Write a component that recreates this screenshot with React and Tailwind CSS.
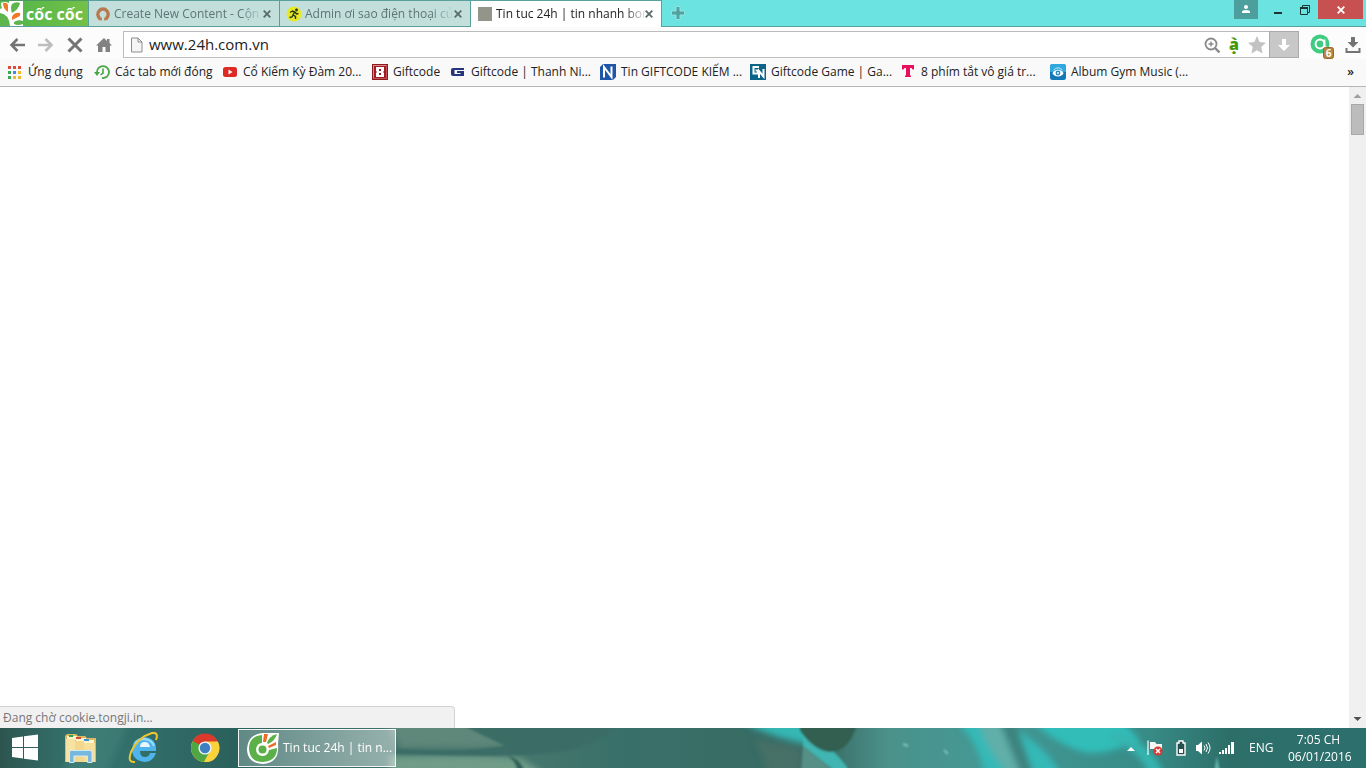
import React, { useState } from 'react';

const CocCocMark = () => (
  <svg className="w-6 h-[25px] shrink-0" viewBox="0 0 24 25">
    <rect width="23" height="25" fill="#fff" />
    <path d="M0 0 H9 L9 2 Q4 0 1 2 Q1 5 2 7 L0 8 Z" fill="#5aba4a" />
    <path d="M3 2 Q7 1 8 4 L8 11 Q3 8 3 2 Z" fill="#f07a2b" />
    <path d="M12 3 Q16 0 20 2 Q19 8 12 12 Q10 7 12 3 Z" fill="#5fb54d" />
    <path d="M12 16 Q14 11 20 12 Q21 15 18 16 L12 19 Z" fill="#f07a2b" />
    <path d="M14 21 Q18 18 23 20 V23 Q18 25 14 23 Z" fill="#5fb54d" />
    <path d="M0 12 Q9 13 10 25 H0 Z" fill="#5fb54d" />
  </svg>
);

const RingIcon = () => (
  <svg className="w-4 h-4" viewBox="0 0 16 16">
    <path d="M5 12.5 A5.2 5.2 0 1 1 11 12.5" fill="none" stroke="#b8794f" strokeWidth="3.4" />
    <path d="M3 14 L7 14.5 L6.5 11 Z M13 14 L9 14.5 L9.5 11 Z" fill="#b8794f" />
  </svg>
);

const RunnerIcon = () => (
  <svg className="w-4 h-4" viewBox="0 0 16 16">
    <circle cx="8" cy="8" r="7.5" fill="#e6ea26" />
    <circle cx="10.5" cy="4" r="1.4" fill="#26331c" />
    <path d="M4 6.5 L6.5 5 L9 6 L10.5 8 L12.5 7.5 M8.5 6 L7 9 L9.5 10.5 L9.5 13 M7 9 L6 11 L3.5 11.5" fill="none" stroke="#26331c" strokeWidth="1.4" />
  </svg>
);

const SquareIcon = () => (
  <svg className="w-4 h-4" viewBox="0 0 16 16">
    <rect x="1" y="1" width="14" height="14" fill="#93948a" />
  </svg>
);

const CloseIcon = () => (
  <svg className="w-2 h-2" viewBox="0 0 8 8">
    <path d="M0.7 0.7 L7.3 7.3 M7.3 0.7 L0.7 7.3" stroke="currentColor" strokeWidth="1.8" />
  </svg>
);

const AppsIcon = () => (
  <svg className="w-4 h-4" viewBox="0 0 16 16">
    <path d="M1 2h3v3H1z M6 2h3v3H6z M11 2h3v3h-3z" fill="#dd4b3e" />
    <path d="M1 7h3v3H1z M1 12h3v3H1z" fill="#3aa757" />
    <path d="M6 7h3v3H6z" fill="#4688f1" />
    <path d="M11 7h3v3h-3z M6 12h3v3H6z M11 12h3v3h-3z" fill="#f0b92d" />
  </svg>
);

const HistoryIcon = () => (
  <svg className="w-4 h-4" viewBox="0 0 16 16">
    <path d="M3 8.5 A6 6 0 1 1 8 14" fill="none" stroke="#4ba648" strokeWidth="1.8" />
    <path d="M0 8 L6 8 L3 12 Z" fill="#4ba648" />
    <path d="M9 4.5 V9 L6.5 11" fill="none" stroke="#4ba648" strokeWidth="1.6" />
  </svg>
);

const YoutubeIcon = () => (
  <svg className="w-4 h-4" viewBox="0 0 16 16">
    <rect x="1" y="3" width="14" height="10" rx="2.5" fill="#dd2a23" />
    <path d="M6.5 5.5 L10.5 8 L6.5 10.5 Z" fill="#fff" />
  </svg>
);

const EightIcon = () => (
  <svg className="w-4 h-4" viewBox="0 0 16 16">
    <rect width="16" height="16" fill="#8e1b20" />
    <path d="M1 15 V1 H15 Z" fill="#d98a8c" />
    <path d="M15 1 V15 H1 Z" fill="#c05558" />
    <rect x="2" y="2" width="12" height="12" fill="#a01d22" />
    <path d="M4 3 H12 V7 L11 8 L12 9 V13 H4 V9 L5 8 L4 7 Z" fill="#fff" />
    <path d="M7 5 H9 V7 H7 Z M7 9 H9 V11 H7 Z" fill="#a01d22" />
  </svg>
);

const GIcon = () => (
  <svg className="w-4 h-4" viewBox="0 0 16 16">
    <path d="M3 4 H14 V6 H4.5 V10 H10.5 V9 H7 V7 H14 V12 H3 Q1 12 1 10 V6 Q1 4 3 4 Z" fill="#27357f" />
  </svg>
);

const NIcon = () => (
  <svg className="w-4 h-4" viewBox="0 0 16 16">
    <path d="M3 0 H16 V13 L13 16 H0 V3 Z" fill="#1f56a8" />
    <path d="M4 13.5 V3 L11.5 13 V2.5" fill="none" stroke="#fff" strokeWidth="2" />
  </svg>
);

const GNIcon = () => (
  <svg className="w-4 h-4" viewBox="0 0 16 16">
    <rect width="16" height="16" fill="#0c6489" />
    <path d="M9 3 H3.5 V9.5 H8 V6.5 H5.5" fill="none" stroke="#fff" strokeWidth="2" />
    <path d="M9 14 V7 L13.5 12.5 V5" fill="none" stroke="#fff" strokeWidth="2" />
  </svg>
);

const TIcon = () => (
  <svg className="w-4 h-4" viewBox="0 0 16 16">
    <path d="M2 1 H14 V5.5 H12.5 L11.5 4 H10 V11.5 H11 V13 H5 V11.5 H6 V4 H4.5 L3.5 5.5 H2 Z" fill="#e8105c" />
  </svg>
);

const AlbumIcon = () => (
  <svg className="w-4 h-4" viewBox="0 0 16 16">
    <rect width="16" height="16" rx="2.5" fill="#1478b8" />
    <path d="M0 8 V2.5 Q0 0 2.500 0 H13.5 Q16 0 16 2.5 V8 Z" fill="#2fa8de" />
    <path d="M3.5 6 Q8 1.500 12.5 6" fill="none" stroke="#bfe6f7" />
    <path d="M2.5 9.5 Q3 6.500 8 5.500 Q13 6.500 13.5 9.5 Q11.5 12.500 8 12.500 Q4.500 12.500 2.500 9.500 Z" fill="#fff" />
    <circle cx="8" cy="9" r="2.4" fill="#1f8bc9" />
    <circle cx="8" cy="9" r="1" fill="#fff" />
  </svg>
);

const tabs = [
  { id: 1, title: 'Create New Content - Cộn', icon: RingIcon },
  { id: 2, title: 'Admin ơi sao điện thoại củ', icon: RunnerIcon },
  { id: 3, title: 'Tin tuc 24h | tin nhanh bor', icon: SquareIcon },
];

const bookmarks = [
  { label: 'Ứng dụng', icon: AppsIcon, width: 'w-[87px]' },
  { label: 'Các tab mới đóng', icon: HistoryIcon, width: 'w-[128px]' },
  { label: 'Cổ Kiếm Kỳ Đàm 20...', icon: YoutubeIcon, width: 'w-[150px]' },
  { label: 'Giftcode', icon: EightIcon, width: 'w-[78px]' },
  { label: 'Giftcode | Thanh Ni...', icon: GIcon, width: 'w-[150px]' },
  { label: 'Tin GIFTCODE KIẾM ...', icon: NIcon, width: 'w-[150px]' },
  { label: 'Giftcode Game | Ga...', icon: GNIcon, width: 'w-[150px]' },
  { label: '8 phím tắt vô giá tr...', icon: TIcon, width: 'w-[150px]' },
  { label: 'Album Gym Music (...', icon: AlbumIcon, width: 'w-[150px]' },
];

const TabStrip = () => {
  const [active, setActive] = useState(3);

  return (
    <header className="h-[27px] flex bg-[#6be3e0] border-b border-[#5aa19e]">
      <button aria-label="Cốc Cốc menu" className="w-[88px] flex items-center gap-[2px] bg-linear-to-r from-[#4db54a] to-[#74c048] border-t border-[#4d9a60]">
        <CocCocMark />
        <span className="text-white font-bold text-base leading-5 whitespace-nowrap">cốc cốc</span>
      </button>
      <div className="flex">
        {tabs.map(({ id, title, icon: Icon }) => (
          <div
            key={id}
            className={
              id === active
                ? 'w-[191px] h-[27px] flex items-center pl-[6px] pr-2 border-l border-t border-[#5aa19e] bg-white text-[#222]'
                : 'w-[191px] h-[26px] flex items-center pl-[6px] pr-2 border-l border-t border-[#5aa19e] bg-[#c2dfdc] text-[#5f7573]'
            }
          >
            <button onClick={() => setActive(id)} className="flex-1 min-w-0 flex items-center gap-[3px] text-left">
              <span className="shrink-0"><Icon /></span>
              <span className="flex-1 whitespace-nowrap text-xs [mask-image:linear-gradient(to_right,black_85%,transparent)]">
                {title}
              </span>
            </button>
            <button aria-label="Close tab" className="shrink-0 text-[#5a6b6a]"><CloseIcon /></button>
          </div>
        ))}
      </div>
      <button aria-label="New tab" className="w-8 flex items-center justify-center border-l border-[#5aa19e]">
        <svg className="w-[14px] h-[14px]" viewBox="0 0 14 14">
          <path d="M5 0.500 H9 V5 H13.500 V9 H9 V13.500 H5 V9 H0.500 V5 H5 Z" fill="#52a3a0" stroke="#90e5e2" strokeWidth="1" />
        </svg>
      </button>
      <div className="ml-auto flex items-start pr-[3px]">
        <button aria-label="Profile" className="w-6 h-[19px] flex justify-center items-center bg-[#4c9f9d]">
          <svg className="w-[10px] h-3" viewBox="0 0 10 12">
            <circle cx="5" cy="3" r="2" fill="#fff" />
            <path d="M1 9 V8 Q1 6 5 6 Q9 6 9 8 V9 Z" fill="#fff" />
          </svg>
        </button>
        <button aria-label="Minimize" className="ml-[7px] w-[26px] h-[19px] flex justify-center items-center">
          <svg className="w-2 h-3" viewBox="0 0 8 12"><path d="M0 8 H8 V10 H0 Z" fill="#1c3433" /></svg>
        </button>
        <button aria-label="Restore" className="w-[27px] h-[19px] flex justify-center items-center">
          <svg className="w-[10px] h-[10px]" viewBox="0 0 10 10">
            <path d="M0.5 2.5 H7.5 V9.5 H0.5 Z M2.5 2 V0.5 H9.5 V7.5 H8" fill="none" stroke="#1c3433" />
            <path d="M0 2 H8 V4 H0 Z" fill="#1c3433" />
          </svg>
        </button>
        <button aria-label="Close" className="w-[45px] h-[19px] flex justify-center items-center bg-[#c75050] text-white"><CloseIcon /></button>
      </div>
    </header>
  );
};

const Toolbar = () => {
  const [url, setUrl] = useState('www.24h.com.vn');

  return (
    <div className="h-8 pt-1 flex bg-[#fcfcfc] text-[#777]">
      <div className="w-[123px] flex items-center gap-[13px] pl-[9px] pb-px">
        <button aria-label="Back">
          <svg className="w-4 h-4" viewBox="0 0 16 16"><path d="M16 8 H2.5 M8.5 2 L2.5 8 L8.5 14" fill="none" stroke="#747474" strokeWidth="2.6" /></svg>
        </button>
        <button aria-label="Forward">
          <svg className="w-4 h-4" viewBox="0 0 16 16"><path d="M0 8 H13.5 M7.5 2 L13.5 8 L7.5 14" fill="none" stroke="#bdbdbd" strokeWidth="2.6" /></svg>
        </button>
        <button aria-label="Stop">
          <svg className="w-4 h-4" viewBox="0 0 16 16"><path d="M1.5 1.5 L14.5 14.5 M14.5 1.5 L1.5 14.5" stroke="#747474" strokeWidth="3" /></svg>
        </button>
        <button aria-label="Home">
          <svg className="w-4 h-4" viewBox="0 0 16 16"><path d="M8 1 L11 4 V2 H13.5 V6 L16 8.5 H14 V15 H9.5 V10 H6.5 V15 H2 V8.5 H0 Z" fill="#828282" /></svg>
        </button>
      </div>
      <div className="flex-1 h-[27px] flex items-center bg-white border border-[#bcbcbc] pl-[6px]">
        <svg className="w-[13px] h-4 shrink-0" viewBox="0 0 13 16">
          <path d="M1.5 1 H8 L12 5 V15 H1.5 Z" fill="#f5f5f5" stroke="#8c8c8c" />
          <path d="M8 1 V5 H12" fill="none" stroke="#8c8c8c" />
        </svg>
        <input
          aria-label="Address"
          value={url}
          onChange={(e) => setUrl(e.target.value)}
          className="flex-1 min-w-0 pl-[6px] pb-0.5 text-[15px] leading-5 text-[#222] outline-none bg-transparent"
        />
        <div className="flex items-center">
          <button aria-label="Zoom">
            <svg className="w-4 h-4" viewBox="0 0 16 16">
              <circle cx="7" cy="7" r="5.5" fill="none" stroke="#8a8a8a" strokeWidth="1.8" />
              <path d="M11 11 L15.5 15.5" stroke="#8a8a8a" strokeWidth="2.4" />
              <path d="M4.500 7 H9.500 M7 4.500 V9.500" stroke="#8a8a8a" strokeWidth="1.4" />
            </svg>
          </button>
          <button aria-label="Add accents" className="w-7 pb-0.5 text-[#42990a] text-base leading-6 font-extrabold">ạ̀</button>
          <button aria-label="Bookmark this page">
            <svg className="w-[18px] h-[18px]" viewBox="0 0 18 18"><path d="M9 0 L11.6 6 L18 6.7 L13.2 11 L14.6 17.5 L9 14.2 L3.4 17.5 L4.8 11 L0 6.7 L6.4 6 Z" fill="#c2c2c2" /></svg>
          </button>
          <button aria-label="Download media" className="ml-[3px] w-[30px] h-[27px] -mr-px flex items-center justify-center bg-[#c8c8c8] border border-[#aaa]">
            <svg className="w-3 h-3" viewBox="0 0 12 12"><path d="M4 0 H8 V6 H12 L6 12 L0 6 H4 Z" fill="#fff" /></svg>
          </button>
        </div>
      </div>
      <div className="w-[67px] flex items-center pl-[9px] pr-[5px] justify-between">
        <button aria-label="Extension">
          <svg className="w-7 h-7" viewBox="0 0 28 28">
            <circle cx="12" cy="13" r="9.5" fill="#3fcb82" />
            <circle cx="12" cy="13" r="4.4" fill="none" stroke="#fff" strokeWidth="2" />
            <circle cx="12" cy="13" r="2" fill="#3fcb82" />
            <path d="M16.4 8.5 V15 Q17 17.500 19 16" fill="none" stroke="#fff" strokeWidth="2" />
            <rect x="15.5" y="16.5" width="10" height="11" rx="2" fill="#b98440" stroke="#96662b" />
            <text x="20.500" y="26" textAnchor="middle" fontSize="10" fontWeight="700" fill="#fff">6</text>
          </svg>
        </button>
        <button aria-label="Downloads" className="pb-px">
          <svg className="w-4 h-4" viewBox="0 0 16 16"><path d="M6 0 H10 V5 H13.5 L8 10.5 L2.5 5 H6 Z M0.500 11 H2.500 V14 H13.500 V11 H15.500 V16 H0.500 Z" fill="#747474" /></svg>
        </button>
      </div>
    </div>
  );
};

const BookmarksBar = () => (
  <nav aria-label="Bookmarks" className="h-7 pl-[7px] pr-3 pb-px flex items-center bg-[#f9f9f9] border-b border-[#b6b6b6] text-xs text-[#222]">
    {bookmarks.map(({ label, icon: Icon, width }) => (
      <a key={label} href="#" className={`${width} shrink-0 flex items-center gap-[5px] whitespace-nowrap`}>
        <span className="shrink-0"><Icon /></span>
        {label}
      </a>
    ))}
    <button aria-label="More bookmarks" className="ml-auto leading-4 font-semibold">»</button>
  </nav>
);

const Page = () => (
  <main className="relative flex-1 min-h-0 flex bg-white">
    <div className="flex-1"></div>
    <div className="w-[17px] flex flex-col items-center justify-between bg-[#f0f0f0]">
      <div className="flex flex-col items-center">
        <svg className="w-[17px] h-[17px]" viewBox="0 0 17 17"><path d="M4.5 11 L8.5 7 L12.5 11 Z" fill="#a0a0a0" /></svg>
        <div className="w-[13px] h-[31px] bg-[#bcbcbc] border border-[#a8a8a8]"></div>
      </div>
      <svg className="w-[17px] h-[17px]" viewBox="0 0 17 17"><path d="M4.5 6 L12.5 6 L8.5 10 Z" fill="#505050" /></svg>
    </div>
    <div role="status" className="absolute left-0 bottom-0 w-1/3 h-[22px] pl-[3px] bg-[#f1f1f1] border-t border-r border-[#d2d2d2] rounded-tr text-xs leading-[22px] text-[#777]">
      Đang chờ cookie.tongji.in...
    </div>
  </main>
);

const Wallpaper = () => (
  <svg className="absolute inset-0 w-full h-full" viewBox="0 0 1366 40" preserveAspectRatio="none">
    <defs>
      <linearGradient id="base" x1="0" x2="1" y1="0" y2="0">
        <stop offset="0" stopColor="#2d5550" />
        <stop offset="0.06" stopColor="#367671" />
        <stop offset="0.17" stopColor="#2b615d" />
        <stop offset="0.35" stopColor="#4d7b70" />
        <stop offset="0.45" stopColor="#397069" />
        <stop offset="0.6" stopColor="#376a63" />
        <stop offset="0.65" stopColor="#4b918a" />
        <stop offset="0.72" stopColor="#449995" />
        <stop offset="0.84" stopColor="#388c88" />
        <stop offset="0.9" stopColor="#2d6e68" />
        <stop offset="1" stopColor="#2c706e" />
      </linearGradient>
      <filter id="soft"><feGaussianBlur stdDeviation="3" /></filter>
      <filter id="edge"><feGaussianBlur stdDeviation="1" /></filter>
    </defs>
    <rect width="1366" height="40" fill="url(#base)" />
    <g filter="url(#soft)">
      <path d="M90 -9 L130 -9 L105 49 L60 49 Z" fill="#42817a" opacity="0.6" />
      <path d="M385 -9 H495 L520 18 L400 20 Z" fill="#5f877a" />
      <path d="M390 28 Q460 25 520 30 L550 49 H390 Z" fill="#6f9c88" />
      <path d="M735 -9 H830 V20 Q780 14 735 -9 Z" fill="#35b7b4" />
      <path d="M755 12 L800 20 L800 49 H770 Z" fill="#466f66" />
      <path d="M955 -9 H1000 Q1050 20 1062 49 H985 Q980 16 955 -9 Z" fill="#35b9b7" />
      <path d="M978 -9 H996 L1030 49 H1010 Q985 20 978 -9 Z" fill="#60afa8" />
      <path d="M998 -9 H1014 L1035 49 H1022 Z" fill="#3e837f" />
      <path d="M1030 -9 H1120 L1140 12 Q1100 30 1080 23 Q1055 15 1030 -9 Z" fill="#31bdb9" />
      <path d="M1110 3 Q1150 10 1165 49 H1150 Q1140 20 1110 12 Z" fill="#35b5b0" />
    </g>
    <g filter="url(#edge)">
      <path d="M460 -4 H620 Q600 16 560 24 Q500 31 380 25 V20 Q460 25 505 18 Z" fill="#3a6d66" />
      <path d="M508 28 Q520 30 525 44 H518 Q516 33 508 28 Z" fill="#315f57" />
      <path d="M803 5 Q835 18 850 44 H836 L803 18 Z" fill="#3fb5b1" />
      <path d="M803 18 L835 44 H801 Z" fill="#558f86" />
      <path d="M800 -4 H857 Q849 24 829 24 Q812 21 800 2 Z" fill="#315e50" />
      <path d="M903 16 L908 18 M944 22 L948 26" stroke="#84c4bf" strokeWidth="2" />
      <path d="M1214 44 L1217 28 L1220 44 Z" fill="#62b2aa" />
    </g>
  </svg>
);

const Taskbar = () => (
  <footer className="relative h-10 bg-[#2f6964]">
    <Wallpaper />
    <div className="relative h-10 flex items-center text-white text-xs">
      <div className="flex items-center pl-[11px]">
        <button aria-label="Start" className="w-[53px]">
          <svg className="w-7 h-7" viewBox="0 0 28 28"><path d="M1 4 L12 2.5 V13 H1 Z M13 2.3 L27 0.5 V13 H13 Z M1 14 H12 V24.5 L1 23 Z M13 14 H27 V26.5 L13 24.7 Z" fill="#fff" /></svg>
        </button>
        <button aria-label="File Explorer" className="w-16">
          <svg className="w-8 h-8" viewBox="0 0 32 32">
            <path d="M1 4 L3 2 H12 L14 4 H21 L23 6 H32 V30 H1 Z" fill="#dcb962" />
            <path d="M3 4 H13 V8 H3 Z M12 6 H22 V10 H12 Z M20 8 H30 V12 H20 Z" fill="#fff3c9" />
            <path d="M5 3 H9 V5 H5 Z" fill="#29a64a" />
            <path d="M12 5 H17 V7 H12 Z" fill="#d04a31" />
            <path d="M20 7 H25 V9 H20 Z" fill="#3b8ed0" />
            <path d="M2 7 H11 V30 H2 Z" fill="#f6e3a3" />
            <path d="M11 9 H20 V30 H11 Z" fill="#f1d88c" />
            <path d="M20 11 H31 V30 H20 Z" fill="#f5df9a" />
            <path d="M5.500 30.500 V20 Q5.500 18.500 7 18.500 H26 Q28 18.500 28 20 V30.500 H23.500 V24 H10 V30.500 Z" fill="#77b8df" stroke="#d0ebf8" />
          </svg>
        </button>
        <button aria-label="Internet Explorer" className="w-[62px]">
          <svg className="w-8 h-8" viewBox="0 0 32 32">
            <path d="M28 21 Q25 30 16 30 Q4 28 4 17 Q5 6 16 5 Q29 6 28 19 H12 Q12 25 17 25 Q21 25 22 21 Z" fill="#4fb4ec" />
            <path d="M12 15 Q12 10 17 10 Q21 10 22 15 Z" fill="#e7f7fd" />
            <path d="M7 12 Q10 7 17 7 Q24 8 26 14" fill="none" stroke="#9bdcf9" strokeWidth="2" />
            <path d="M7 30 Q-1 31 3 20 Q10 5 24 1 Q31 0 28 8" fill="none" stroke="#edc52e" strokeWidth="2" />
          </svg>
        </button>
        <button aria-label="Chrome" className="w-12">
          <svg className="w-[30px] h-[30px]" viewBox="0 0 30 30">
            <circle cx="15" cy="15" r="14" fill="#f9d23c" />
            <path d="M15 15 L2.5 8.5 A14 14 0 0 1 28 9 H15 Z" fill="#da3a2c" />
            <path d="M15 15 L2.9 8 A14 14 0 0 0 14 29 L20 18 Z" fill="#4fa744" />
            <path d="M15 8.5 H27.8 A14 14 0 0 1 14 29 L20.5 18 Z" fill="#f9d23c" />
            <circle cx="15" cy="15" r="6.6" fill="#f3f3f3" />
            <circle cx="15" cy="15" r="5.2" fill="#3f7fc4" />
          </svg>
        </button>
        <button className="w-[158px] h-[38px] flex items-center gap-1 pl-2 border border-white/90 bg-linear-to-r from-white/25 to-white/45 whitespace-nowrap">
          <svg className="w-8 h-8 shrink-0" viewBox="0 0 32 32">
            <path d="M16 1 H32 L31 12 Q33 31 16 32 Q0 31 0 17 Q1 2 16 1 Z" fill="#fff" />
            <path d="M15 3 Q2 4 2 17 Q3 30 16 30 Q30 29 30 16 L22 18 Q21 24 15 24 Q9 23 9 17 Q10 11 15 11 Z" fill="#5cb04a" />
            <circle cx="15.5" cy="17.5" r="4" fill="#5cb04a" />
            <path d="M17 2 L21 2 L19 10 H16 Z M21 14 L29 10 V13 L22 16 Z" fill="#ed6d27" />
            <path d="M20 11 Q22 4 30 2 Q28 9 21 12 Z" fill="#5cb04a" />
          </svg>
          Tin tuc 24h | tin n...
        </button>
      </div>
      <div className="ml-auto flex items-center pr-[17px]">
        <button aria-label="Show hidden icons" className="w-5">
          <svg className="w-2 h-2" viewBox="0 0 8 8"><path d="M0 7 L4 3 L8 7 Z" fill="#fff" /></svg>
        </button>
        <button aria-label="Action Center" className="w-[29px]">
          <svg className="w-4 h-4" viewBox="0 0 16 16">
            <path d="M1 0.500 V15" stroke="#fff" strokeWidth="1.2" />
            <path d="M3 2 H8 L9.500 4 H15 V10 H8 L7 9 H3 Z" fill="#f3f7f6" />
            <circle cx="11" cy="11" r="4.5" fill="#da3730" />
            <path d="M9 9 L13 13 M13 9 L9 13" stroke="#fff" strokeWidth="1.5" />
          </svg>
        </button>
        <button aria-label="Battery" className="w-[19px]">
          <svg className="w-[10px] h-4" viewBox="0 0 10 16">
            <path d="M3 1 H7 V3 H9 V15 H1 V3 H3 Z" fill="#254f4c" stroke="#fff" strokeWidth="1.4" />
            <path d="M3 9 H7 V13 H3 Z" fill="#fff" />
          </svg>
        </button>
        <button aria-label="Volume" className="w-6">
          <svg className="w-4 h-4" viewBox="0 0 16 16">
            <path d="M1 5 H3 L7 1.5 V14.5 L3 11 H1 Z" fill="#fff" />
            <path d="M9 5.5 Q11 8 9 10.5 M11 4 Q14 8 11 12 M13 2.5 Q17 8 13 13.5" fill="none" stroke="#fff" />
          </svg>
        </button>
        <button aria-label="Network" className="w-[30px]">
          <svg className="w-4 h-4" viewBox="0 0 16 16"><path d="M0 12 H2 V14 H0 Z M3 10 H5 V14 H3 Z M6 8 H8 V14 H6 Z M9 5 H11 V14 H9 Z M12 2 H15 V14 H12 Z" fill="#fff" /></svg>
        </button>
        <button className="w-[39px] text-left">ENG</button>
        <button className="w-[61px] text-center leading-[17px]">
          <span className="block">7:05 CH</span>
          <span className="block">06/01/2016</span>
        </button>
      </div>
    </div>
  </footer>
);

const App = () => {
  return (
    <div className="h-screen flex flex-col overflow-hidden font-['Open_Sans','Noto_Sans',sans-serif]">
      <TabStrip />
      <Toolbar />
      <BookmarksBar />
      <Page />
      <Taskbar />
    </div>
  );
};

export default App;
